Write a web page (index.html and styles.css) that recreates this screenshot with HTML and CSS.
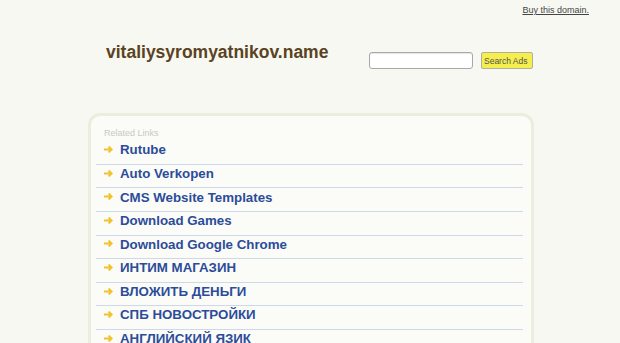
FILE: index.html
```html
<!DOCTYPE html>
<html lang="en">
<head>
    <meta charset="UTF-8">
    <meta name="viewport" content="width=device-width, initial-scale=1.0">
    <title>vitaliysyromyatnikov.name</title>
    <link rel="stylesheet" href="styles.css">
</head>
<body>
<div class="topbar">
    <a href="#">Buy this domain.</a>
</div>
<header class="header">
    <h1 class="title">vitaliysyromyatnikov.name</h1>
    <form class="search">
        <input type="text" class="search-input">
        <button type="button" class="search-btn">Search Ads</button>
    </form>
</header>
<section class="links-box">
    <p class="links-label">Related Links</p>
    <ul class="links">
        <li><svg class="arrow" width="9" height="7" viewBox="0 0 9 7"><path d="M0 3.5H7.6M4.6 0.6L7.6 3.5L4.6 6.4" fill="none" stroke="#f2c22e" stroke-width="2"/></svg><a href="#">Rutube</a></li>
        <li><svg class="arrow" width="9" height="7" viewBox="0 0 9 7"><path d="M0 3.5H7.6M4.6 0.6L7.6 3.5L4.6 6.4" fill="none" stroke="#f2c22e" stroke-width="2"/></svg><a href="#">Auto Verkopen</a></li>
        <li><svg class="arrow" width="9" height="7" viewBox="0 0 9 7"><path d="M0 3.5H7.6M4.6 0.6L7.6 3.5L4.6 6.4" fill="none" stroke="#f2c22e" stroke-width="2"/></svg><a href="#">CMS Website Templates</a></li>
        <li><svg class="arrow" width="9" height="7" viewBox="0 0 9 7"><path d="M0 3.5H7.6M4.6 0.6L7.6 3.5L4.6 6.4" fill="none" stroke="#f2c22e" stroke-width="2"/></svg><a href="#">Download Games</a></li>
        <li><svg class="arrow" width="9" height="7" viewBox="0 0 9 7"><path d="M0 3.5H7.6M4.6 0.6L7.6 3.5L4.6 6.4" fill="none" stroke="#f2c22e" stroke-width="2"/></svg><a href="#">Download Google Chrome</a></li>
        <li><svg class="arrow" width="9" height="7" viewBox="0 0 9 7"><path d="M0 3.5H7.6M4.6 0.6L7.6 3.5L4.6 6.4" fill="none" stroke="#f2c22e" stroke-width="2"/></svg><a href="#">ИНТИМ МАГАЗИН</a></li>
        <li><svg class="arrow" width="9" height="7" viewBox="0 0 9 7"><path d="M0 3.5H7.6M4.6 0.6L7.6 3.5L4.6 6.4" fill="none" stroke="#f2c22e" stroke-width="2"/></svg><a href="#">ВЛОЖИТЬ ДЕНЬГИ</a></li>
        <li><svg class="arrow" width="9" height="7" viewBox="0 0 9 7"><path d="M0 3.5H7.6M4.6 0.6L7.6 3.5L4.6 6.4" fill="none" stroke="#f2c22e" stroke-width="2"/></svg><a href="#">СПБ НОВОСТРОЙКИ</a></li>
        <li><svg class="arrow" width="9" height="7" viewBox="0 0 9 7"><path d="M0 3.5H7.6M4.6 0.6L7.6 3.5L4.6 6.4" fill="none" stroke="#f2c22e" stroke-width="2"/></svg><a href="#">АНГЛИЙСКИЙ ЯЗИК</a></li>
    </ul>
</section>
</body>
</html>
```

FILE: styles.css
```css
body {
    font-family: "Liberation Sans", Arial, sans-serif;
    background-color: #f8f8f2;
    margin: 0;
    padding: 0 0 0 2px;
}
.topbar {
    height: 30px;
    box-sizing: border-box;
    padding: 5px 31px 0 0;
    text-align: right;
    font-size: 9px;
    line-height: 11px;
}
.topbar a {
    color: #444;
    text-decoration: underline;
}
.header {
    width: 446px;
    height: 83px;
    margin: 0 auto;
    display: flex;
    justify-content: space-between;
    align-items: flex-start;
}
.title {
    margin: 12px 0 0 18px;
    font-size: 17.5px;
    line-height: 20px;
    font-weight: bold;
    color: #5a4322;
}
.search {
    display: flex;
    gap: 8px;
    margin: 22px 1px 0 0;
}
.search-input {
    width: 104px;
    height: 17px;
    box-sizing: border-box;
    border: 1px solid #a8a8a8;
    border-radius: 3px;
    background: #fff;
    box-shadow: inset 0 1px 1px rgba(0, 0, 0, 0.1);
    padding: 0 3px;
    margin: 0;
}
.search-btn {
    width: 52px;
    height: 17px;
    box-sizing: border-box;
    border: 1px solid #b0b0a0;
    border-radius: 2px;
    background-color: #f5ee4c;
    color: #555;
    font-family: "Liberation Sans", Arial, sans-serif;
    font-size: 8.5px;
    padding: 0 2px;
    text-align: left;
    margin: 0;
}
.links-box {
    width: 446px;
    margin: 0 auto;
    box-sizing: border-box;
    border: 3px solid #ecedde;
    border-radius: 12px;
    background-color: #fbfbf7;
    padding: 9.6px 8px 0 5px;
    height: 260px;
}
.links-label {
    margin: 0;
    padding-left: 8px;
    font-size: 9px;
    line-height: 14px;
    color: #c9c9c2;
}
.links {
    list-style: none;
    margin: 1.7px 0 0;
    padding: 0;
}
.links li {
    border-bottom: 1px solid #cdd8ea;
    padding: 1.1px 0 5.47px 8px;
    line-height: 16px;
    font-size: 13.3px;
    font-weight: bold;
}
.arrow {
    vertical-align: 1.2px;
    margin-right: 7px;
}
.links a {
    color: #2c4c9a;
    text-decoration: none;
}
```
